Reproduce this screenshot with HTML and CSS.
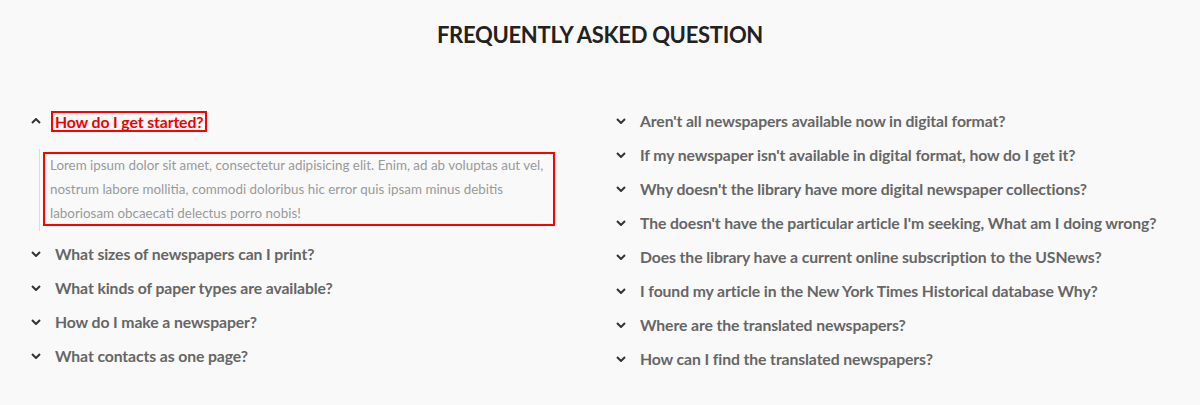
FILE: index.html
```html
<!DOCTYPE html>
<html lang="en">
<head>
<meta charset="utf-8">
<title>FAQ</title>
<link rel="stylesheet" href="styles.css">
</head>
<body>
<section class="faq">
  <h2 class="faq-title">FREQUENTLY ASKED QUESTION</h2>
  <div class="faq-grid">
    <ul class="faq-list">
      <li class="faq-item open">
        <div class="faq-q">
          <svg class="chev" viewBox="0 0 10 6" width="10" height="6"><path d="M1 5 L5 1 L9 5" fill="none" stroke="#333" stroke-width="2"/></svg>
          <span class="q-text active">How do I get started?</span>
        </div>
        <div class="faq-a">
          <p class="a-text">Lorem ipsum dolor sit amet, consectetur adipisicing elit. Enim, ad ab voluptas aut vel, nostrum labore mollitia, commodi doloribus hic error quis ipsam minus debitis laboriosam obcaecati delectus porro nobis!</p>
        </div>
      </li>
      <li class="faq-item"><div class="faq-q"><svg class="chev" viewBox="0 0 10 6" width="10" height="6"><path d="M1 1 L5 5 L9 1" fill="none" stroke="#333" stroke-width="2"/></svg><span class="q-text">What sizes of newspapers can I print?</span></div></li>
      <li class="faq-item"><div class="faq-q"><svg class="chev" viewBox="0 0 10 6" width="10" height="6"><path d="M1 1 L5 5 L9 1" fill="none" stroke="#333" stroke-width="2"/></svg><span class="q-text">What kinds of paper types are available?</span></div></li>
      <li class="faq-item"><div class="faq-q"><svg class="chev" viewBox="0 0 10 6" width="10" height="6"><path d="M1 1 L5 5 L9 1" fill="none" stroke="#333" stroke-width="2"/></svg><span class="q-text">How do I make a newspaper?</span></div></li>
      <li class="faq-item"><div class="faq-q"><svg class="chev" viewBox="0 0 10 6" width="10" height="6"><path d="M1 1 L5 5 L9 1" fill="none" stroke="#333" stroke-width="2"/></svg><span class="q-text">What contacts as one page?</span></div></li>
    </ul>
    <ul class="faq-list">
      <li class="faq-item"><div class="faq-q"><svg class="chev" viewBox="0 0 10 6" width="10" height="6"><path d="M1 1 L5 5 L9 1" fill="none" stroke="#333" stroke-width="2"/></svg><span class="q-text">Aren't all newspapers available now in digital format?</span></div></li>
      <li class="faq-item"><div class="faq-q"><svg class="chev" viewBox="0 0 10 6" width="10" height="6"><path d="M1 1 L5 5 L9 1" fill="none" stroke="#333" stroke-width="2"/></svg><span class="q-text">If my newspaper isn't available in digital format, how do I get it?</span></div></li>
      <li class="faq-item"><div class="faq-q"><svg class="chev" viewBox="0 0 10 6" width="10" height="6"><path d="M1 1 L5 5 L9 1" fill="none" stroke="#333" stroke-width="2"/></svg><span class="q-text">Why doesn't the library have more digital newspaper collections?</span></div></li>
      <li class="faq-item"><div class="faq-q"><svg class="chev" viewBox="0 0 10 6" width="10" height="6"><path d="M1 1 L5 5 L9 1" fill="none" stroke="#333" stroke-width="2"/></svg><span class="q-text">The doesn't have the particular article I'm seeking, What am I doing wrong?</span></div></li>
      <li class="faq-item"><div class="faq-q"><svg class="chev" viewBox="0 0 10 6" width="10" height="6"><path d="M1 1 L5 5 L9 1" fill="none" stroke="#333" stroke-width="2"/></svg><span class="q-text">Does the library have a current online subscription to the USNews?</span></div></li>
      <li class="faq-item"><div class="faq-q"><svg class="chev" viewBox="0 0 10 6" width="10" height="6"><path d="M1 1 L5 5 L9 1" fill="none" stroke="#333" stroke-width="2"/></svg><span class="q-text">I found my article in the New York Times Historical database Why?</span></div></li>
      <li class="faq-item"><div class="faq-q"><svg class="chev" viewBox="0 0 10 6" width="10" height="6"><path d="M1 1 L5 5 L9 1" fill="none" stroke="#333" stroke-width="2"/></svg><span class="q-text">Where are the translated newspapers?</span></div></li>
      <li class="faq-item"><div class="faq-q"><svg class="chev" viewBox="0 0 10 6" width="10" height="6"><path d="M1 1 L5 5 L9 1" fill="none" stroke="#333" stroke-width="2"/></svg><span class="q-text">How can I find the translated newspapers?</span></div></li>
    </ul>
  </div>
</section>
</body>
</html>
```
FILE: styles.css
```css
* { box-sizing: border-box; }
html, body { margin: 0; padding: 0; }
body {
  background: #f9f9f9;
  font-family: "Lato", "Open Sans", sans-serif;
  width: 1200px;
  height: 405px;
  overflow: hidden;
}
.faq { padding: 0 30px; }
.faq-title {
  margin: 0;
  padding-top: 21px;
  height: 104px;
  text-align: center;
  font-size: 22px;
  line-height: 28px;
  font-weight: 700;
  color: #222;
  letter-spacing: -0.3px;
}
.faq-grid {
  display: grid;
  grid-template-columns: 1fr 1fr;
  column-gap: 30px;
}
.faq-list { list-style: none; margin: 0; padding: 0; }
.faq-item { padding: 5px 0; }
.faq-q {
  display: flex;
  align-items: center;
  height: 24px;
}
.chev {
  display: block;
  margin-left: 1px;
  margin-right: 14px;
  flex: none;
}
.q-text {
  font-size: 15.75px;
  font-weight: 700;
  color: #666;
  line-height: 20px;
  white-space: nowrap;
  letter-spacing: -0.1px;
}
.q-text.active {
  color: #e00;
  border: 2px solid #f00;
  padding: 0 2px;
  margin-left: -4px;
  line-height: 17px;
}
.faq-a {
  margin: 16px 0 1px 9px;
  border-left: 1px solid #ddd;
  padding: 4px 0 6px 4px;
}
.a-text {
  margin: 0;
  width: 510px;
  outline: 2px solid #f00;
  outline-offset: -1px;
  padding: 0 0 0 6px;
  font-size: 13.4px;
  line-height: 24px;
  color: #999;
}
```
